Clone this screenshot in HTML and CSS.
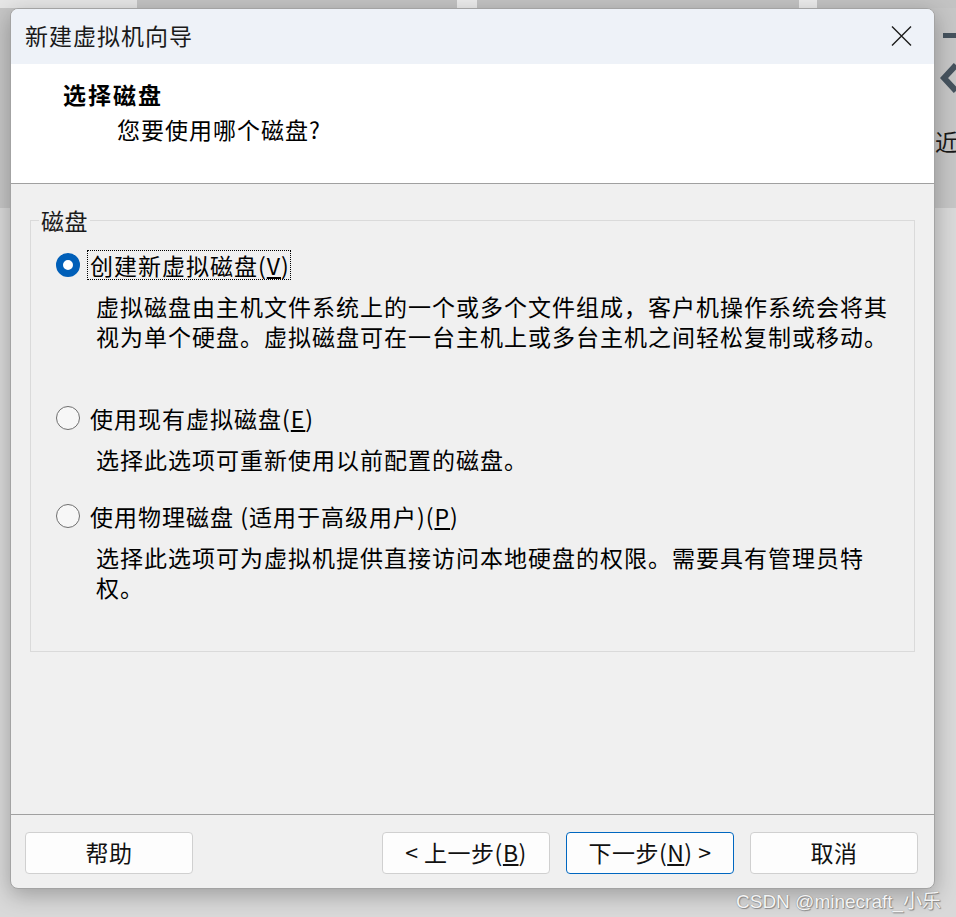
FILE: index.html
```html
<!DOCTYPE html>
<html>
<head>
  <meta charset="UTF-8">
  <title>新建虚拟机向导</title>
  <link rel="stylesheet" href="styles.css">
</head>
<body>
  <div class="desktop">
    <div class="side-app">
      <span class="side-bar"></span>
      <svg class="side-back" width="18" height="32" viewBox="0 0 18 32">
        <path d="M16 3 L4 16 L16 29" fill="none" stroke="#46535e" stroke-width="6"/>
      </svg>
      <span class="side-text">近</span>
    </div>

    <div class="wizard">
      <div class="titlebar">
        <span class="title">新建虚拟机向导</span>
        <svg class="close" width="21" height="20" viewBox="0 0 21 20">
          <path d="M1 0.5 L20 19.5 M20 0.5 L1 19.5" stroke="#1b1b1b" stroke-width="1.4"/>
        </svg>
      </div>

      <div class="header">
        <div class="step-title">选择磁盘</div>
        <div class="step-sub">您要使用哪个磁盘?</div>
      </div>

      <div class="content">
        <fieldset class="group">
          <legend>磁盘</legend>

          <div class="option first">
            <div class="option-row">
              <span class="radio checked"></span>
              <span class="option-label focused">创建新虚拟磁盘(<u>V</u>)</span>
            </div>
            <p class="option-desc">虚拟磁盘由主机文件系统上的一个或多个文件组成，客户机操作系统会将其<br>视为单个硬盘。虚拟磁盘可在一台主机上或多台主机之间轻松复制或移动。</p>
          </div>

          <div class="option">
            <div class="option-row">
              <span class="radio"></span>
              <span class="option-label">使用现有虚拟磁盘(<u>E</u>)</span>
            </div>
            <p class="option-desc">选择此选项可重新使用以前配置的磁盘。</p>
          </div>

          <div class="option">
            <div class="option-row">
              <span class="radio"></span>
              <span class="option-label">使用物理磁盘 (适用于高级用户)(<u>P</u>)</span>
            </div>
            <p class="option-desc">选择此选项可为虚拟机提供直接访问本地硬盘的权限。需要具有管理员特<br>权。</p>
          </div>
        </fieldset>
      </div>

      <div class="footer">
        <button class="btn">帮助</button>
        <span class="spacer"></span>
        <button class="btn">&lt; 上一步(<u>B</u>)</button>
        <button class="btn default">下一步(<u>N</u>) &gt;</button>
        <button class="btn">取消</button>
      </div>
    </div>

    <div class="watermark">CSDN @minecraft_小乐</div>
  </div>
</body>
</html>
```

FILE: styles.css
```css
body {
  margin: 0;
  font-family: "Noto Sans CJK SC", "Noto Sans", sans-serif;
}
.desktop {
  position: relative;
  width: 956px;
  height: 917px;
  overflow: hidden;
  background-color: #d9d9d9;
  background-image:
    linear-gradient(to right, #e6e6e6 0 137px, #c3c3c3 137px 457px, #ececec 457px 477px, #c3c3c3 477px 799px, #ececec 799px 817px, #c3c3c3 817px),
    linear-gradient(#c6c6c6, #c6c6c6);
  background-size: 100% 8px, 100% 208px;
  background-repeat: no-repeat;
}

/* app behind the dialog, only its right edge is visible */
.side-app {
  position: absolute;
  left: 926px;
  top: 0;
  width: 30px;
  height: 208px;
}
.side-bar {
  position: absolute;
  left: 17px;
  top: 33px;
  width: 14px;
  height: 5px;
  background: #46535e;
}
.side-back {
  position: absolute;
  left: 14px;
  top: 62px;
}
.side-text {
  position: absolute;
  left: 9px;
  top: 126px;
  font-size: 23px;
  line-height: 30px;
  color: #1a1a1a;
}

.wizard {
  position: absolute;
  left: 10px;
  top: 8px;
  width: 923px;
  border: 1px solid #a3a3a3;
  border-radius: 8px;
  background: #f0f0f0;
  overflow: hidden;
  box-shadow: 0 6px 22px rgba(0,0,0,0.28);
  z-index: 1;
}
.titlebar {
  height: 55px;
  box-sizing: border-box;
  display: flex;
  align-items: center;
  padding: 0 22px 4px 14px;
  background: #eef2f8;
}
.title {
  flex: 1;
  font-size: 23px;
  letter-spacing: 1px;
  color: #1a1a1a;
}
.close {
  margin-top: 3px;
}
.header {
  height: 120px;
  box-sizing: border-box;
  padding: 15px 0 0 52px;
  background: #fff;
  border-bottom: 1px solid #a0a0a0;
  font-size: 23px;
  line-height: 30px;
}
.step-title {
  font-weight: bold;
  letter-spacing: 2px;
}
.step-sub {
  margin: 5px 0 0 54px;
  letter-spacing: 1px;
}
.content {
  height: 630px;
  box-sizing: border-box;
  padding: 21px 19px 0 19px;
}
.group {
  margin: 0;
  padding: 15px 0 0 0;
  height: 447px;
  box-sizing: border-box;
  border: 1px solid #dadada;
  font-size: 23px;
  line-height: 30px;
  letter-spacing: 1px;
}
.group legend {
  margin-left: 8px;
  padding: 0 2px;
  letter-spacing: 0.5px;
  color: #1a1a1a;
}
.option {
  margin: 0 0 27px 25px;
}
.option.first {
  margin-bottom: 52px;
}
.option-row {
  display: flex;
  align-items: center;
}
.radio {
  width: 24px;
  height: 24px;
  box-sizing: border-box;
  border-radius: 50%;
  border: 1.5px solid #6f6f6f;
  background: #f7f7f7;
}
.radio.checked {
  border: 7px solid #005fb8;
  background: #fff;
}
.option-label {
  margin-left: 7px;
  padding: 0 0 0 2px;
  line-height: 28px;
  border: 1px dotted transparent;
}
.option-label.focused {
  border-color: #000;
}
.option-desc {
  margin: 11px 0 0 40px;
}
.footer {
  display: flex;
  gap: 16px;
  padding: 17px 16px 14px 14px;
  border-top: 1px solid #a0a0a0;
}
.spacer {
  flex: 1;
}
.btn {
  width: 168px;
  height: 42px;
  border: 1px solid #d0d0d0;
  border-radius: 4px;
  background: #fdfdfd;
  font-family: inherit;
  font-size: 23px;
  letter-spacing: 0.5px;
  color: #111;
  padding: 0 0 3px;
}
.btn.default {
  border-color: #0067c0;
}
.watermark {
  position: absolute;
  left: 736px;
  top: 886px;
  font-family: "Liberation Sans", "Noto Sans CJK SC", sans-serif;
  font-size: 19px;
  color: #f4f4f4;
  text-shadow: 0 0 1px #777, 1px 1px 1px #888;
  z-index: 2;
}
```
